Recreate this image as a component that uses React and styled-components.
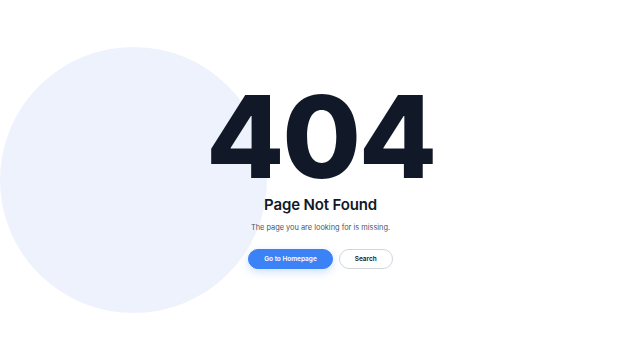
import React from "react";
import styled, { createGlobalStyle } from "styled-components";

const Global = createGlobalStyle`
  html, body { margin: 0; padding: 0; background: #ffffff; }
  body { font-family: Inter, "Noto Sans", sans-serif; }
  * { box-sizing: border-box; }
`;

const Page = styled.main`
  position: relative;
  width: 641px;
  height: 360px;
  overflow: hidden;
  background: #ffffff;
  display: flex;
  align-items: flex-start;
  justify-content: center;
  padding-top: 91px;
`;

const Blob = styled.div`
  position: absolute;
  left: 0;
  top: 47px;
  width: 267px;
  height: 266px;
  border-radius: 50%;
  background: #eef2fc;
`;

const Content = styled.div`
  position: relative;
  display: flex;
  flex-direction: column;
  align-items: center;
`;

const Code = styled.h1`
  margin: 0;
  font-size: 114px;
  font-weight: 800;
  line-height: 91px;
  letter-spacing: -0.02em;
  color: #111827;
`;

const Title = styled.h2`
  margin: 13px 0 0;
  font-size: 15px;
  font-weight: 600;
  line-height: 20px;
  letter-spacing: -0.01em;
  color: #111827;
`;

const Subtitle = styled.p`
  margin: 8px 0 0;
  font-size: 7.4px;
  line-height: 10px;
  color: #4b5563;
`;

const Actions = styled.div`
  display: flex;
  gap: 6px;
  margin-top: 16px;
`;

const Button = styled.button`
  height: 20px;
  padding: 0 15px;
  border-radius: 999px;
  font-family: inherit;
  font-size: 6.5px;
  font-weight: 600;
  cursor: pointer;
  border: 1px solid ${(p) => (p.$primary ? "#3b82f6" : "#d1d5db")};
  background: ${(p) => (p.$primary ? "#3b82f6" : "#ffffff")};
  color: ${(p) => (p.$primary ? "#ffffff" : "#111827")};
  box-shadow: ${(p) => (p.$primary ? "0 3px 8px rgba(59,130,246,0.25)" : "none")};
`;

export default function App() {
  return (
    <>
      <Global />
      <Page>
        <Blob />
        <Content>
          <Code>404</Code>
          <Title>Page Not Found</Title>
          <Subtitle>The page you are looking for is missing.</Subtitle>
          <Actions>
            <Button $primary>Go to Homepage</Button>
            <Button>Search</Button>
          </Actions>
        </Content>
      </Page>
    </>
  );
}
